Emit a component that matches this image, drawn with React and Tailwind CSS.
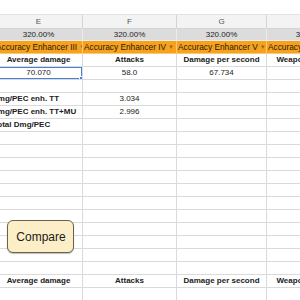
import React from "react";

const cols = "grid grid-cols-[88px_94px_90px_90px] ml-[-5px]";

// rows below the orange title row, top to bottom as in the sheet
const dataRows = [
  { e: "Average damage", f: "Attacks", g: "Damage per second", h: "Weapon efficiency", bold: true },
  { e: "70.070", f: "58.0", g: "67.734", h: "", selected: true },
  { e: "", f: "", g: "", h: "" },
  { label: "Dmg/PEC enh. TT", f: "3.034", g: "", h: "" },
  { label: "Dmg/PEC enh. TT+MU", f: "2.996", g: "", h: "" },
  { label: "Total Dmg/PEC", f: "", g: "", h: "" },
  ...Array.from({ length: 11 }, () => ({ e: "", f: "", g: "", h: "" })),
  { e: "Average damage", f: "Attacks", g: "Damage per second", h: "Weapon efficiency", bold: true },
  { e: "", f: "", g: "", h: "" },
];

const titles = [
  "Accuracy Enhancer III",
  "Accuracy Enhancer IV",
  "Accuracy Enhancer V",
  "Accuracy Enhancer VI",
];

const Cell = ({ children, className = "" }) => (
  <div
    className={`h-[13px] border-r border-b border-[#dadada] flex items-center justify-center overflow-hidden whitespace-nowrap ${className}`}
  >
    {children}
  </div>
);

export default function App() {
  return (
    <div
      className="w-[300px] h-[300px] overflow-hidden bg-white relative text-[8px] text-[#222]"
      style={{ fontFamily: '"Liberation Sans", Arial, sans-serif' }}
    >
      {/* strip above the sheet */}
      <div className="h-[15px] bg-white border-b border-[#e2e2e2]" />

      {/* column letters */}
      <div className={cols}>
        {["E", "F", "G", "H"].map((c) => (
          <div
            key={c}
            className="h-[14px] bg-[#f3f3f3] border-r border-b border-[#d4d4d4] flex items-center justify-center text-[#555]"
          >
            {c}
          </div>
        ))}
      </div>

      {/* percent row */}
      <div className={cols}>
        {[0, 1, 2, 3].map((i) => (
          <div
            key={i}
            className="h-[12px] bg-[#dcdcdc] border-r border-b border-[#ececec] flex items-center justify-center whitespace-nowrap"
          >
            320.00%
          </div>
        ))}
      </div>

      {/* orange title row */}
      <div className={cols}>
        {titles.map((t) => (
          <div
            key={t}
            className="h-[13px] bg-[#f6a21e] border-r border-b border-[#f9c97a] flex items-center justify-between pl-[1px] pr-[3px] overflow-hidden whitespace-nowrap text-[8.3px] text-[#2a1a00]"
          >
            <span className="shrink-0">{t}</span>
            <span className="shrink-0 text-[6px] text-[#9a6a1c] pl-[2px]">▼</span>
          </div>
        ))}
      </div>

      {dataRows.map((r, i) => (
        <div key={i} className={cols}>
          <Cell className={`relative ${r.bold ? "font-bold" : ""} ${r.label ? "justify-start font-bold" : ""}`}>
            {r.label ? (
              <span className={r.label.startsWith("Total") ? "ml-[-2px]" : "ml-[-3px]"}>{r.label}</span>
            ) : (
              r.e
            )}
            {r.selected && (
              <>
                <div className="absolute inset-[-1px] border-2 border-[#4a7fd6]" />
                <div className="absolute right-[-2px] bottom-[-2px] w-[5px] h-[5px] bg-[#4a7fd6] border border-white" />
              </>
            )}
          </Cell>
          <Cell className={r.bold ? "font-bold" : ""}>{r.f}</Cell>
          <Cell className={r.bold ? "font-bold" : ""}>{r.g}</Cell>
          <Cell className={r.bold ? "font-bold" : ""}>{r.h}</Cell>
        </div>
      ))}

      {/* floating drawing */}
      <button className="absolute left-[7px] top-[220px] w-[67px] h-[33px] rounded-[6px] bg-[#fcefc8] border border-[#6b604c] shadow-[0_1px_1px_rgba(0,0,0,0.25)] text-[12px] text-[#1a1a1a] pl-[1px]">
        Compare
      </button>
    </div>
  );
}
